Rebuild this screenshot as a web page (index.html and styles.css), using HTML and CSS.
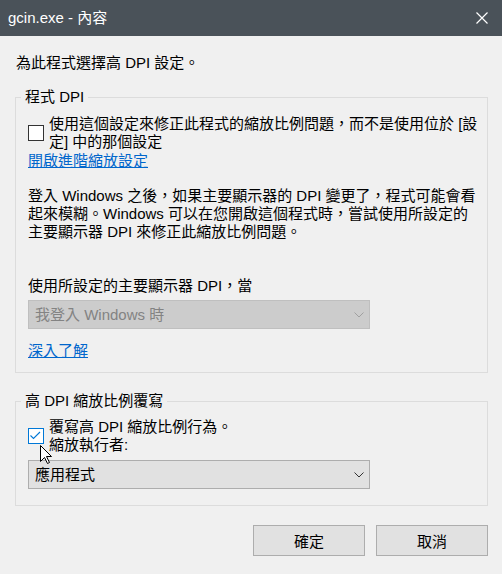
FILE: index.html
```html
<!DOCTYPE html>
<html lang="zh-Hant">
<head>
    <meta charset="UTF-8">
    <title>gcin.exe - 內容</title>
    <link rel="stylesheet" href="styles.css">
</head>
<body>
    <div class="titlebar">
        <span class="title">gcin.exe - 內容</span>
        <svg class="close" width="12" height="12" viewBox="0 0 12 12">
            <path d="M0.5 0.5 L11.5 11.5 M11.5 0.5 L0.5 11.5" stroke="#fff" stroke-width="1.2" fill="none"/>
        </svg>
    </div>

    <div class="content">
        <p class="intro">為此程式選擇高 DPI 設定。</p>

        <fieldset class="group">
            <legend>程式 DPI</legend>
            <div class="check-row">
                <span class="checkbox"></span>
                <span class="check-label">使用這個設定來修正此程式的縮放比例問題，而不是使用位於 [設定] 中的那個設定</span>
            </div>
            <a class="link" href="#">開啟進階縮放設定</a>
            <p class="note">登入 Windows 之後，如果主要顯示器的 DPI 變更了，程式可能會看起來模糊。Windows 可以在您開啟這個程式時，嘗試使用所設定的主要顯示器 DPI 來修正此縮放比例問題。</p>
            <p class="label">使用所設定的主要顯示器 DPI，當</p>
            <div class="select disabled">
                <span>我登入 Windows 時</span>
                <svg width="10" height="6" viewBox="0 0 10 6"><path d="M0.5 0.5 L5 5 L9.5 0.5" stroke="#a0a0a0" fill="none"/></svg>
            </div>
            <a class="link more" href="#">深入了解</a>
        </fieldset>

        <fieldset class="group second">
            <legend>高 DPI 縮放比例覆寫</legend>
            <div class="check-row">
                <span class="checkbox checked">
                    <svg width="14" height="14" viewBox="0 0 14 14"><path d="M1.5 6.5 L4.5 9.5 L11 3" stroke="#0078d7" stroke-width="1.1" fill="none"/></svg>
                    <svg class="cursor" width="13" height="20" viewBox="0 0 13 20">
                        <path d="M0.5 0.5 L0.5 16.5 L4.5 12.5 L7.5 18.5 L9.5 17.5 L6.5 11.5 L11.5 11.5 Z" fill="#fff" stroke="#000"/>
                    </svg>
                </span>
                <span class="check-label">覆寫高 DPI 縮放比例行為。<br>縮放執行者:</span>
            </div>
            <div class="select">
                <span>應用程式</span>
                <svg width="10" height="6" viewBox="0 0 10 6"><path d="M0.5 0.5 L5 5 L9.5 0.5" stroke="#333" fill="none"/></svg>
            </div>
        </fieldset>

        <div class="buttons">
            <button>確定</button>
            <button>取消</button>
        </div>
    </div>
</body>
</html>
```

FILE: styles.css
```css
body {
    margin: 0;
    background: #f0f0f0;
    font-family: "Liberation Sans", "Noto Sans CJK TC", sans-serif;
    font-size: 15px;
    line-height: 18px;
    color: #000;
}
.titlebar {
    height: 36px;
    background: #4a5259;
    color: #fff;
    display: flex;
    align-items: center;
    justify-content: space-between;
    padding: 0 14px 0 8px;
}
.title {
    font-size: 15px;
}
.close {
    display: block;
}
.content {
    padding: 0 14px 0 15px;
}
p {
    margin: 0;
}
.intro {
    margin-top: 18px;
    padding-left: 1px;
}
.group {
    margin: 15px 0 0 0;
    padding: 8px 6px 12px 12px;
    border: 1px solid #dcdcdc;
}
.group.second {
    margin-top: 18px;
    padding-top: 7px;
    padding-bottom: 16px;
}
.group legend {
    padding: 0 4px;
    margin-left: -7px;
    line-height: 20px;
}
.check-row {
    display: flex;
    align-items: center;
}
.checkbox {
    position: relative;
    width: 14px;
    height: 14px;
    border: 1px solid #333;
    background: #fff;
    margin-right: 5px;
    flex-shrink: 0;
}
.checkbox.checked {
    border-color: #0078d7;
}
.checkbox svg {
    display: block;
}
.cursor {
    position: absolute;
    left: 11px;
    top: 16px;
}
.link {
    display: inline-block;
    color: #0066cc;
    text-decoration: underline;
    margin-top: 1px;
}
.note {
    margin-top: 17px;
}
.label {
    margin-top: 36px;
}
.select {
    width: 340px;
    height: 27px;
    margin-top: 5px;
    border: 1px solid #adadad;
    background: #e1e1e1;
    display: flex;
    align-items: center;
    justify-content: space-between;
    padding: 0 5px 0 6px;
    box-sizing: content-box;
    width: 329px;
}
.select svg {
    display: block;
}
.select.disabled {
    background: #cccccc;
    border-color: #bfbfbf;
    color: #838383;
}
.more {
    margin-top: 13px;
}
.second .select {
    margin-top: 6px;
}
.buttons {
    display: flex;
    justify-content: flex-end;
    gap: 11px;
    margin-top: 19px;
}
button {
    width: 112px;
    height: 31px;
    background: #e1e1e1;
    border: 1px solid #adadad;
    font-family: inherit;
    font-size: 15px;
    color: #000;
    padding: 0;
}
```
